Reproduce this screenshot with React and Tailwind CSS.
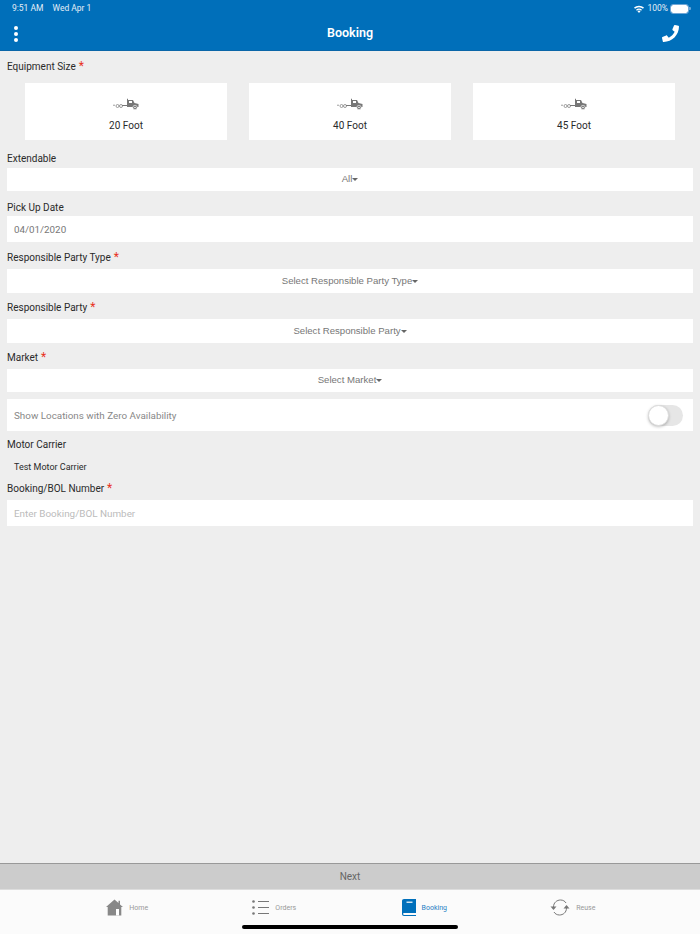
import React from "react";
import { FaPhone } from "react-icons/fa";

const Req = () => <span className="text-[#e8321e] ml-[3px] text-[12px] leading-[14px] inline-block h-[14px] align-top">*</span>;

const Label = ({ text, required, className = "" }) => (
  <div className={`px-[7px] h-[14px] text-[10px] leading-[16px] text-[#2a2a2a] ${className}`}>
    {text}
    {required && <Req />}
  </div>
);

const Select = ({ text, className = "" }) => (
  <div className={`mx-[7px] bg-white flex items-center justify-center font-['Liberation_Sans',sans-serif] text-[9.6px] text-[#777] ${className}`}>
    {text}
    <span className="w-0 h-0 border-x-[3.5px] border-x-transparent border-t-[3.5px] border-t-[#666]"></span>
  </div>
);

const Truck = () => (
  <svg width="27" height="13" viewBox="0 0 27 13" className="text-[#777]" fill="currentColor">
    <path d="M14 5.5 V1 L15 0.5 V2 H20 L21.5 5 L25.5 6 V9 H14 V8 H9 V7 H14 Z" />
    <rect x="16" y="3" width="3" height="2" fill="#fff" />
    <circle cx="22" cy="9.5" r="2.2" fill="#777" stroke="#fff" strokeWidth="0.6" />
    <circle cx="22" cy="9.5" r="0.8" fill="#fff" />
    <circle cx="4.5" cy="8" r="1.5" fill="none" stroke="currentColor" strokeWidth="0.7" />
    <circle cx="8" cy="8" r="1.5" fill="none" stroke="currentColor" strokeWidth="0.7" />
    <rect x="0.5" y="6.6" width="1" height="1.4" />
  </svg>
);

const SizeCard = ({ text }) => (
  <div className="w-[202px] h-[57px] bg-white flex flex-col items-center pt-[15px]">
    <Truck />
    <div className="mt-[8px] text-[10px] leading-[14px] text-[#2a2a2a]">{text}</div>
  </div>
);

const HomeIcon = () => (
  <svg width="17" height="17" viewBox="0 0 17 17">
    <path fill="#888" d="M8.5 0.5 L12.5 4 V1.8 H14 V5.4 L17 8 H15.3 V16.5 H1.7 V8 H0 Z" />
    <rect x="10" y="10" width="3" height="6.5" fill="#fff" />
  </svg>
);

const OrdersIcon = () => (
  <svg width="17" height="15" viewBox="0 0 17 15" fill="#777">
    <circle cx="1.5" cy="1.5" r="1.3" />
    <circle cx="1.5" cy="7.5" r="1.3" />
    <circle cx="1.5" cy="13.5" r="1.3" />
    <rect x="6" y="1" width="11" height="1" />
    <rect x="6" y="7" width="11" height="1" />
    <rect x="6" y="13" width="11" height="1" />
  </svg>
);

const BookIcon = () => (
  <svg width="14" height="17" viewBox="0 0 14 17">
    <path fill="#0070bb" d="M2 0 H14 V14 H2.2 C1.4 14 1.1 14.6 1.1 15 C1.1 15.5 1.5 15.9 2.2 15.9 H14 V17 H2 C0.8 17 0 16.2 0 15 V2 C0 0.8 0.8 0 2 0 Z" />
    <rect x="4.5" y="2.6" width="6" height="1.2" fill="#fff" />
  </svg>
);

const ReuseIcon = () => (
  <svg width="20" height="17" viewBox="0 0 20 17" fill="none" stroke="#777" strokeWidth="1">
    <path d="M3.5 8 C3.5 3.5 7 1 10.5 1 C13 1 15 2.2 16 4" />
    <path d="M16.5 9 C16.5 13.5 13 16 9.5 16 C7 16 5 14.8 4 13" />
    <path d="M0.5 7.5 H6.5 L3.5 11 Z" fill="#777" stroke="none" />
    <path d="M13.5 9.5 H19.5 L16.5 6 Z" fill="#777" stroke="none" />
  </svg>
);

const Tab = ({ icon, text, active, className = "" }) => (
  <div className={`flex items-center justify-center gap-[6px] ${className}`}>
    {icon}
    <span className={`text-[7px] pt-[2px] ${active ? "text-[#1f7fc4]" : "text-[#999]"}`}>{text}</span>
  </div>
);

export default function App() {
  return (
    <div className="w-[700px] h-[934px] flex flex-col bg-[#eeeeee] font-['Roboto',sans-serif] overflow-hidden">
      {/* header */}
      <div className="h-[51px] bg-[#006fba] border-b border-b-[#0a66a8] text-white shrink-0">
        <div className="flex justify-between items-center h-[17px] pl-[12px] pr-[9px] text-[8.5px] text-[#e4eef7]">
          <div className="flex gap-[9px]">
            <span>9:51 AM</span>
            <span>Wed Apr 1</span>
          </div>
          <div className="flex items-center gap-[3px]">
            <svg width="10" height="8" viewBox="0 0 10 8" fill="#fff">
              <path d="M5 8 L3.4 6 A2.6 2.6 0 0 1 6.6 6 Z" />
              <path d="M0 2.6 A7.4 7.4 0 0 1 10 2.6 L9 3.7 A6 6 0 0 0 1 3.7 Z" />
              <path d="M2 4.7 A4.6 4.6 0 0 1 8 4.7 L7.1 5.7 A3.3 3.3 0 0 0 2.9 5.7 Z" />
            </svg>
            <span>100%</span>
            <div className="flex items-center">
              <div className="w-[17px] h-[8px] bg-white rounded-[2px] outline outline-1 outline-[#6ea6d6]"></div>
              <div className="w-[2px] h-[3px] ml-[1px] bg-[#6ea6d6] rounded-r-[1px]"></div>
            </div>
          </div>
        </div>
        <div className="h-[33px] grid grid-cols-3 items-center pl-[14px] pr-[21px]">
          <div className="flex flex-col gap-[2px]">
            <span className="w-[4px] h-[4px] rounded-full bg-white"></span>
            <span className="w-[4px] h-[4px] rounded-full bg-white"></span>
            <span className="w-[4px] h-[4px] rounded-full bg-white"></span>
          </div>
          <span className="text-[12.5px] font-semibold text-center relative left-[3.5px]">Booking</span>
          <div className="flex justify-end">
            <FaPhone size={17} />
          </div>
        </div>
      </div>

      {/* form */}
      <div className="flex-1 flex flex-col">
        <Label text="Equipment Size" required className="mt-[8px]" />
        <div className="mt-[10px] mx-[25px] flex justify-between">
          <SizeCard text="20 Foot" />
          <SizeCard text="40 Foot" />
          <SizeCard text="45 Foot" />
        </div>
        <Label text="Extendable" className="mt-[11px]" />
        <Select text="All" className="mt-[3px] h-[23px]" />
        <Label text="Pick Up Date" className="mt-[9px]" />
        <div className="mt-[2px] mx-[7px] h-[26px] bg-white flex items-center px-[7px] pt-[2px] text-[9.8px] text-[#777]">04/01/2020</div>
        <Label text="Responsible Party Type" required className="mt-[8px]" />
        <Select text="Select Responsible Party Type" className="mt-[5px] h-[24px]" />
        <Label text="Responsible Party" required className="mt-[7px]" />
        <Select text="Select Responsible Party" className="mt-[5px] h-[24px]" />
        <Label text="Market" required className="mt-[7px]" />
        <Select text="Select Market" className="mt-[5px] h-[23px]" />
        <div className="mt-[7px] mx-[7px] h-[32px] bg-white flex items-center justify-between pl-[7px] pr-[10px] text-[9.85px] text-[#888]">
          <span className="pt-[2px]">Show Locations with Zero Availability</span>
          <div className="w-[35px] h-[21px] rounded-full bg-[#e6e6e6] relative">
            <div className="absolute left-0 top-0 w-[21px] h-[21px] rounded-full bg-white border border-[#ddd] shadow-[0_1px_3px_rgba(0,0,0,0.25)]"></div>
          </div>
        </div>
        <Label text="Motor Carrier" className="mt-[6px]" />
        <div className="mt-[10px] px-[14px] h-[12px] text-[9px] leading-[12px] text-[#2a2a2a]">Test Motor Carrier</div>
        <Label text="Booking/BOL Number" required className="mt-[8px]" />
        <div className="mt-[5px] mx-[7px] h-[26px] bg-white flex items-center px-[7px] pt-[2px] text-[9.9px] text-[#bbb]">Enter Booking/BOL Number</div>
      </div>

      {/* next */}
      <div className="h-[27px] shrink-0 bg-[#cccccc] border-t border-t-[#999] border-b border-b-[#ddd] flex items-center justify-center text-[10px] text-[#666]">Next</div>

      {/* tabs */}
      <div className="h-[44px] shrink-0 bg-[#fbfbfb] relative">
        <div className="grid grid-cols-4 h-[35px] items-center px-[53px]">
          <Tab icon={<HomeIcon />} text="Home" />
          <Tab icon={<OrdersIcon />} text="Orders" className="pr-[3px]" />
          <Tab icon={<BookIcon />} text="Booking" active />
          <Tab icon={<ReuseIcon />} text="Reuse" />
        </div>
        <div className="absolute left-[242px] top-[35px] w-[216px] h-[4px] rounded-full bg-black"></div>
      </div>
    </div>
  );
}
